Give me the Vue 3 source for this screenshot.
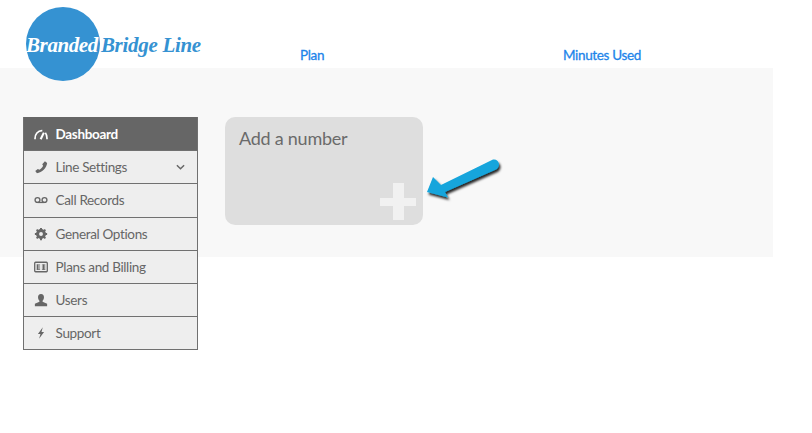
<script setup>
const items = [
  { label: 'Dashboard', icon: 'gauge', active: true },
  { label: 'Line Settings', icon: 'phone', caret: true },
  { label: 'Call Records', icon: 'voicemail' },
  { label: 'General Options', icon: 'gear' },
  { label: 'Plans and Billing', icon: 'card' },
  { label: 'Users', icon: 'user' },
  { label: 'Support', icon: 'bolt' },
]
</script>

<template>
  <div class="page">
    <header class="top">
      <div class="logo">
        <span class="circle"></span>
        <span class="brand"><span class="w">Branded</span><span class="b">Bridge Line</span></span>
      </div>
      <span class="col plan">Plan</span>
      <span class="col used">Minutes Used</span>
    </header>
    <section class="band">
      <nav class="menu">
        <a v-for="it in items" :key="it.label" class="item" :class="{ active: it.active }">
          <svg class="ico" viewBox="0 0 16 16">
            <g v-if="it.icon === 'gauge'">
              <path d="M1.2 14C0.8 8 4.5 4 9.5 4.2" fill="none" stroke="currentColor" stroke-width="1.9"/>
              <path d="M13 6.5C14.5 8.5 15 11 14.8 14" fill="none" stroke="currentColor" stroke-width="1.9"/>
              <path d="M7.6 14L11.3 6.4" fill="none" stroke="currentColor" stroke-width="2.4"/>
            </g>
            <path v-else-if="it.icon === 'phone'" d="M12.5 1.5L15 3.4C14.6 8.8 9 14.6 3.4 15L1.4 12.6L4.4 10.2L6.2 11.2C8 10.2 9.6 8.4 10.4 6.5L9.4 4.8Z" fill="currentColor"/>
            <g v-else-if="it.icon === 'voicemail'" fill="none" stroke="currentColor" stroke-width="1.5">
              <circle cx="4" cy="8" r="2.8"/>
              <circle cx="12" cy="8" r="2.8"/>
              <path d="M4 10.8H12"/>
            </g>
            <g v-else-if="it.icon === 'gear'">
              <circle cx="8" cy="8" r="4.2" fill="none" stroke="currentColor" stroke-width="3"/>
              <path d="M8 1V15M1 8H15M3 3L13 13M13 3L3 13" stroke="currentColor" stroke-width="2.2"/>
              <circle cx="8" cy="8" r="2.2" fill="#eee"/>
            </g>
            <g v-else-if="it.icon === 'card'">
              <rect x="0.8" y="2.6" width="14.4" height="10.8" rx="1" fill="none" stroke="currentColor" stroke-width="1.5"/>
              <path d="M3 5.6H7M3 8H7M3 10.4H7M9 5.6H13M9 8H13M9 10.4H13" stroke="currentColor" stroke-width="1.2"/>
              <path d="M4 5V11M11 5V11" stroke="currentColor" stroke-width="1.4"/>
            </g>
            <path v-else-if="it.icon === 'user'" d="M8 1C10.4 1 11.4 2.8 11.4 4.8C11.4 6.8 10.4 8.2 9.8 8.8V10L15 12.4V15H1V12.4L6.2 10V8.8C5.6 8.2 4.6 6.8 4.6 4.8C4.6 2.8 5.6 1 8 1Z" fill="currentColor"/>
            <path v-else d="M10 1.5L4.5 9H7.4L5.8 14.5L11.5 6.8H8.6Z" fill="currentColor"/>
          </svg>
          <span class="label">{{ it.label }}</span>
          <svg v-if="it.caret" class="caret" viewBox="0 0 10 6"><path d="M1 1L5 5L9 1" fill="none" stroke="currentColor" stroke-width="1.6"/></svg>
        </a>
      </nav>
      <div class="card">
        <span class="card-title">Add a number</span>
        <span class="plus"></span>
      </div>
      <svg class="arrow" width="84" height="50" viewBox="0 0 84 50">
        <defs>
          <filter id="sh" x="-20%" y="-20%" width="140%" height="150%">
            <feDropShadow dx="1.5" dy="2.5" stdDeviation="1.2" flood-color="#000" flood-opacity="0.85"/>
          </filter>
        </defs>
        <path d="M6 37L12 22L20 30L71 5C74 3.5 77.5 5.5 78 9C78 12 76.5 13.5 75 14.5L24 37L27 42.5Z" fill="#14a5dc" filter="url(#sh)"/>
      </svg>
    </section>
  </div>
</template>

<style scoped>
.page {
  position: relative;
  width: 812px;
  height: 433px;
  overflow: hidden;
  background: #fff;
  font-family: Lato, "Liberation Sans", sans-serif;
}
.top {
  position: relative;
  height: 68px;
  font-size: 13.5px;
  letter-spacing: -0.35px;
  color: #1c84ea;
}
.col {
  position: absolute;
  top: 47px;
  line-height: 17px;
  -webkit-text-stroke: 0.3px #1c84ea;
}
.plan { left: 300px; }
.used { left: 563px; }
.logo {
  position: absolute;
  left: 26px;
  top: 7px;
  z-index: 2;
  width: 190px;
  height: 74px;
}
.circle {
  position: absolute;
  left: 0;
  top: 0;
  width: 74px;
  height: 74px;
  border-radius: 50%;
  background: #3592d2;
}
.brand {
  position: absolute;
  left: 0;
  top: 25px;
  display: flex;
  gap: 3px;
  white-space: nowrap;
  font-family: "Liberation Serif", serif;
  font-style: italic;
  font-weight: 700;
  font-size: 21px;
  line-height: 26px;
}
.w { color: #fff; letter-spacing: -0.4px; }
.b { color: #3592d2; letter-spacing: -0.3px; }
.band {
  position: relative;
  display: flex;
  align-items: flex-start;
  gap: 27px;
  width: 773px;
  height: 189px;
  padding: 49px 0 0 23px;
  box-sizing: border-box;
  background: #f8f8f8;
}
.menu {
  display: flex;
  flex-direction: column;
  width: 175px;
  box-sizing: border-box;
  border: 1px solid #707070;
  border-top: 0;
  background: #eee;
}
.item {
  display: flex;
  align-items: center;
  height: 33.1px;
  box-sizing: border-box;
  padding: 0 10px 1px 10px;
  border-top: 1px solid #707070;
  color: #666;
  font-size: 13.5px;
  letter-spacing: -0.35px;
}
.item:first-child { height: 33.4px; }
.item:nth-child(n+4) { padding-bottom: 0; }
.active {
  background: #666;
  color: #fff;
  font-weight: 700;
  border-top-color: #666;
}
.ico {
  width: 14px;
  height: 14px;
  flex: none;
}
.label {
  margin-left: 7.6px;
  flex: 1;
}
.caret {
  width: 9px;
  height: 6px;
  margin-right: 2px;
}
.card {
  position: relative;
  width: 198px;
  height: 108px;
  box-sizing: border-box;
  padding: 10px 14px;
  border-radius: 10px;
  background: #dedede;
}
.card-title {
  font-size: 18px;
  line-height: 22px;
  letter-spacing: -0.25px;
  color: #6a6a6a;
}
.plus {
  position: absolute;
  left: 155px;
  top: 66px;
  width: 36px;
  height: 37px;
  background:
    linear-gradient(#f1f1f1, #f1f1f1) center / 11px 37px no-repeat,
    linear-gradient(#f1f1f1, #f1f1f1) center / 36px 8px no-repeat;
}
.arrow {
  position: absolute;
  left: 421px;
  top: 87px;
}
</style>

<style>
html, body { margin: 0; background: #fff; }
</style>
